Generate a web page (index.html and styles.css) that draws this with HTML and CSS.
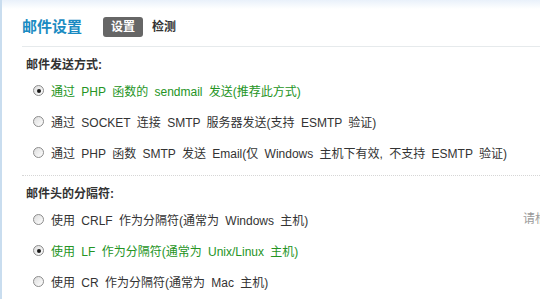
FILE: index.html
```html
<!DOCTYPE html>
<html lang="zh-CN">
<head>
  <meta charset="UTF-8" />
  <title>邮件设置</title>
  <link rel="stylesheet" href="styles.css">
</head>
<body>
  <div class="page">
    <div class="header">
      <h2 class="title">邮件设置</h2>
      <span class="tab current">设置</span>
      <span class="tab">检测</span>
    </div>

    <div class="section">
      <h4>邮件发送方式:</h4>
      <ul class="options">
        <li class="checked"><span class="radio"></span>通过 PHP 函数的 sendmail 发送(推荐此方式)</li>
        <li><span class="radio"></span>通过 SOCKET 连接 SMTP 服务器发送(支持 ESMTP 验证)</li>
        <li><span class="radio"></span>通过 PHP 函数 SMTP 发送 Email(仅 Windows 主机下有效, 不支持 ESMTP 验证)</li>
      </ul>
    </div>

    <div class="section dotted">
      <h4>邮件头的分隔符:</h4>
      <div class="row">
        <ul class="options">
          <li><span class="radio"></span>使用 CRLF 作为分隔符(通常为 Windows 主机)</li>
          <li class="checked"><span class="radio"></span>使用 LF 作为分隔符(通常为 Unix/Linux 主机)</li>
          <li><span class="radio"></span>使用 CR 作为分隔符(通常为 Mac 主机)</li>
        </ul>
        <div class="tip">请根据您的邮件服务器设置选择</div>
      </div>
    </div>
  </div>
</body>
</html>
```

FILE: styles.css
```css
html, body {
  margin: 0;
  padding: 0;
  overflow: hidden;
}

body {
  font-family: 'Liberation Sans', 'Noto Sans CJK SC', sans-serif;
  font-size: 12px;
  color: #333;
  background: #fff;
}

.page {
  width: 538px;
  height: 299px;
  border-left: 2px solid #c9ddef;
  background: linear-gradient(#e9f1fa 0, #fff 9px);
  overflow: hidden;
}

.header {
  display: flex;
  align-items: center;
  margin-left: 20px;
  padding: 17px 0 9px;
  border-bottom: 1px solid #e6eaec;
}

.title {
  margin: 0 21px 0 0;
  font-size: 15px;
  line-height: 20px;
  color: #1a8bc2;
}

.tab {
  padding: 0 8px;
  line-height: 20px;
  font-weight: bold;
  color: #333;
  border-radius: 3px;
}

.tab.current {
  background-color: #666;
  color: #fff;
  margin-right: 1px;
}

.section {
  margin-left: 20px;
  padding: 8px 0 7px;
}

.section.dotted {
  border-top: 1px dotted #d6d6d6;
}

h4 {
  margin: 0;
  padding-left: 4px;
  font-size: 12px;
  line-height: 20px;
  color: #333;
}

.options {
  list-style: none;
  margin: 0;
  padding: 0;
}

.options li {
  display: flex;
  align-items: center;
  height: 31px;
  padding-left: 11px;
  word-spacing: 3px;
  white-space: nowrap;
}

.options li.checked {
  color: #249424;
}

.radio {
  position: relative;
  width: 11px;
  height: 11px;
  box-sizing: border-box;
  margin-right: 7px;
  border: 1px solid #8c8c8c;
  border-radius: 50%;
  background: linear-gradient(135deg, #dcdcdc, #fff);
}

.checked .radio::after {
  content: "";
  position: absolute;
  left: 2.5px;
  top: 2.5px;
  width: 4px;
  height: 4px;
  border-radius: 50%;
  background: #1a1a1a;
}

.row {
  display: flex;
}

.row .options {
  width: 501px;
  flex-shrink: 0;
}

.tip {
  height: 31px;
  line-height: 31px;
  color: #999;
  white-space: nowrap;
}
```
